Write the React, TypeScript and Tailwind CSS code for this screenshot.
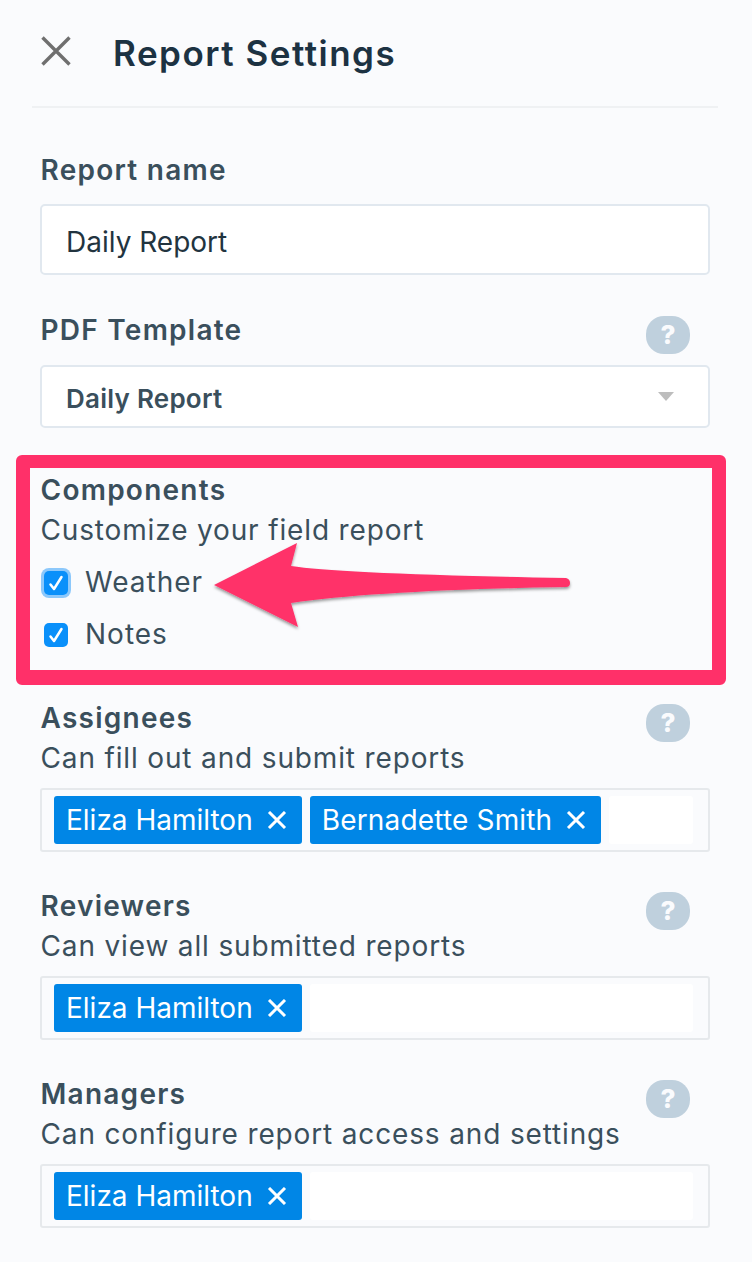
import React from "react";

const Help = ({ className = "" }: { className?: string }) => (
  <div className={`flex h-[38px] w-[44px] items-center justify-center rounded-[18px] bg-[#bfd0dd] text-[26px] font-extrabold leading-none text-[#fafbfd] ${className}`}>?</div>
);

const Label = ({ children, help }: { children: React.ReactNode; help?: boolean }) => (
  <div className="flex h-[40px] items-center justify-between">
    <span className="text-[28px] font-semibold tracking-[1.25px] text-[#3a4f5c]">{children}</span>
    {help && <Help className="mr-[20px] mt-[10px]" />}
  </div>
);

const Sub = ({ children }: { children: React.ReactNode }) => (
  <div className="flex h-[40px] items-center text-[28px] tracking-[0.85px] text-[#3a4f5c]">{children}</div>
);

const Check = ({ focus }: { focus?: boolean }) => (
  <span className={`flex h-[24px] w-[24px] items-center justify-center rounded-[5px] bg-[#0a90fa] ${focus ? "shadow-[0_0_0_3px_#8cc8fb]" : ""}`}>
    <svg width="24" height="24" viewBox="0 0 24 24" fill="none">
      <path d="M6.5 13.5 L10 18 L17.5 6" stroke="#fff" strokeWidth="2.5" strokeLinecap="round" strokeLinejoin="round" />
    </svg>
  </span>
);

const Tag = ({ name, wide }: { name: string; wide?: boolean }) => (
  <div className={`flex h-[48px] items-center gap-[14px] rounded-[3px] bg-[#0086e6] pl-[12px] pr-[15px] text-[28px] text-white ${wide ? "tracking-[0.17px]" : ""}`}>
    <span>{name}</span>
    <svg width="20" height="18" viewBox="0 0 20 18" fill="none">
      <path d="M2 1 L18 17 M18 1 L2 17" stroke="#fff" strokeWidth="3" />
    </svg>
  </div>
);

const Picker = ({ names }: { names: string[] }) => (
  <div className="-ml-[0.5px] mt-[10px] flex h-[64px] items-center gap-[8px] rounded-[3px] border-2 border-[#e6e9ec] bg-[#fafbfd] pl-[12px] pr-[15px]">
    {names.map((n) => <Tag key={n} name={n} wide={n.startsWith("Bernadette")} />)}
    <div className="h-[48px] flex-1 rounded-[3px] bg-white" />
  </div>
);

export default function App() {
  return (
    <div className="relative h-[1262px] w-[752px] overflow-hidden bg-[#fafbfd] font-['Inter',sans-serif]">
      <header className="ml-[32px] mr-[34px] flex h-[108px] items-center border-b-2 border-[#eff1f3] pb-[4px] pl-[9px]">
        <svg width="30" height="30" viewBox="0 0 30 30" fill="none">
          <path d="M1.5 1.5 L28.5 28.5 M28.5 1.5 L1.5 28.5" stroke="#6f6f6f" strokeWidth="3.4" />
        </svg>
        <h1 className="ml-[42px] mt-[4px] text-[35px] font-semibold tracking-[1.5px] text-[#1c3242]">Report Settings</h1>
      </header>

      <main className="pl-[40.5px] pr-[42px]">
        <div className="pt-[42px]">
          <Label>Report name</Label>
        </div>
        <div className="-ml-[0.5px] mt-[14px] flex h-[71px] items-center rounded-[5px] border-2 border-[#e1e8ef] bg-white pl-[24px] pt-[4px] text-[28px] text-[#22343f]">Daily Report</div>

        <div className="mt-[35px]">
          <Label help>PDF Template</Label>
        </div>
        <div className="-ml-[0.5px] mt-[15px] flex h-[63px] items-center justify-between rounded-[5px] border-2 border-[#e1e8ef] bg-white pl-[24px] pr-[34px] pt-[4px] text-[26px] font-semibold tracking-[0.25px] text-[#3a4f5c]">
          <span>Daily Report</span>
          <span className="mb-[4px] h-0 w-0 border-x-[8px] border-t-[9px] border-x-transparent border-t-[#bdbdbd]" />
        </div>

        <div className="mt-[42px]">
          <Label>Components</Label>
          <Sub>Customize your field report</Sub>
          <div className="mt-[7px] flex h-[52px] items-center gap-[17px] pl-[3.5px] text-[28px] tracking-[1px] text-[#3a4f5c]"><Check focus /><span className="-mt-[2px]">Weather</span></div>
          <div className="flex h-[52px] items-center gap-[17px] pl-[3.5px] text-[28px] tracking-[1px] text-[#3a4f5c]"><Check /><span className="-mt-[2px]">Notes</span></div>
        </div>

        <div className="mt-[37px]">
          <Label help>Assignees</Label>
          <Sub>Can fill out and submit reports</Sub>
          <Picker names={["Eliza Hamilton", "Bernadette Smith"]} />
        </div>
        <div className="mt-[34px]">
          <Label help>Reviewers</Label>
          <Sub>Can view all submitted reports</Sub>
          <Picker names={["Eliza Hamilton"]} />
        </div>
        <div className="mt-[34px]">
          <Label help>Managers</Label>
          <Sub>Can configure report access and settings</Sub>
          <Picker names={["Eliza Hamilton"]} />
        </div>
      </main>

      <div className="pointer-events-none absolute left-[16px] top-[455px] h-[230px] w-[710px] rounded-[6px] border-x-[14px] border-b-[15px] border-t-[13px] border-[#ff3069]" />
      <svg className="pointer-events-none absolute left-0 top-0" width="752" height="1262" viewBox="0 0 752 1262" fill="none">
        <defs>
          <filter id="s" x="-10%" y="-20%" width="120%" height="150%">
            <feDropShadow dx="0" dy="2" stdDeviation="1.5" floodColor="#000" floodOpacity="0.4" />
          </filter>
        </defs>
        <path d="M214 585 L297 543 L291 566 Q 340 574 566 578 Q 570 579 570 583 Q 570 587 566 587 Q 380 590 291 603 L298 627 Z" fill="#ff3069" filter="url(#s)" />
      </svg>
    </div>
  );
}
